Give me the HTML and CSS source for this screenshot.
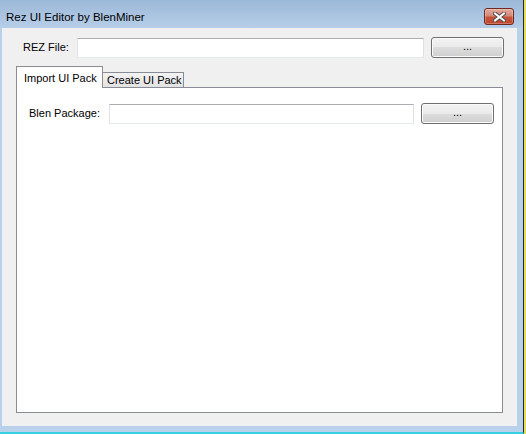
FILE: index.html
```html
<!DOCTYPE html>
<html>
<head>
<meta charset="utf-8">
<title>Rez UI Editor by BlenMiner</title>
<link rel="stylesheet" href="styles.css">
</head>
<body>
<div class="window">
  <div class="titlebar">
    <div class="title">Rez UI Editor by BlenMiner</div>
    <div class="close">
      <svg width="13" height="10" viewBox="0 0 13 10">
        <path d="M2 1.5 L11 8.5 M11 1.5 L2 8.5" stroke="#4a4a4a" stroke-width="4" stroke-linecap="square" fill="none"/>
        <path d="M2 1.5 L11 8.5 M11 1.5 L2 8.5" stroke="#ffffff" stroke-width="2" stroke-linecap="square" fill="none"/>
      </svg>
    </div>
  </div>
  <div class="client">
    <div class="row rez-row">
      <div class="label rez-label">REZ File:</div>
      <div class="textbox rez-box"></div>
      <div class="btn">...</div>
    </div>
    <div class="tabstrip">
      <div class="tab active">Import UI Pack</div>
      <div class="tab">Create UI Pack</div>
    </div>
    <div class="panel">
      <div class="row blen-row">
        <div class="label blen-label">Blen Package:</div>
        <div class="textbox blen-box"></div>
        <div class="btn">...</div>
      </div>
    </div>
  </div>
</div>
</body>
</html>
```

FILE: styles.css
```css
html, body {
  margin: 0;
  padding: 0;
}
body {
  width: 526px;
  height: 434px;
  background: #e9dc5a;
  overflow: hidden;
  font-family: "Liberation Sans", Arial, sans-serif;
  font-size: 11px;
  color: #000;
}
.window {
  width: 523px;
  height: 432px;
  background: #b9d1ea;
  border-right: 1px solid #1f2a33;
  border-bottom: 2px solid #37cfe2;
  display: flex;
  flex-direction: column;
}
.titlebar {
  height: 28px;
  flex: none;
  background: linear-gradient(#9cb8d8, #b6cee8);
  display: flex;
  justify-content: space-between;
  align-items: flex-start;
}
.title {
  margin: 10px 0 0 6px;
  font-size: 11.5px;
  line-height: 14px;
  color: #000;
}
.close {
  box-sizing: border-box;
  width: 30px;
  height: 17px;
  margin: 8px 9px 0 0;
  border: 1px solid #6e2a20;
  border-radius: 3px;
  background: linear-gradient(#e3aa9c 0%, #d68876 45%, #c6533c 55%, #c0452e 100%);
  box-shadow: inset 0 0 0 1px rgba(255,255,255,0.25);
  display: flex;
  align-items: center;
  justify-content: center;
}
.close svg {
  display: block;
}
.client {
  margin-left: 2px;
  width: 515px;
  height: 398px;
  background: #f0f0f0;
  display: flex;
  flex-direction: column;
}
.row {
  display: flex;
  align-items: flex-start;
  height: 21px;
}
.rez-row {
  margin-top: 9px;
  padding-left: 21px;
}
.label {
  line-height: 21px;
  white-space: nowrap;
}
.rez-label {
  width: 54px;
}
.textbox {
  box-sizing: border-box;
  height: 20px;
  margin-top: 1px;
  background: #fff;
  border: 1px solid;
  border-color: #abadb3 #dbdfe6 #e3e9ef #e2e3ea;
}
.rez-box {
  width: 347px;
  margin-right: 7px;
}
.btn {
  box-sizing: border-box;
  width: 73px;
  height: 21px;
  border: 1px solid #707070;
  border-radius: 3px;
  background: linear-gradient(#f2f2f2 0%, #ebebeb 50%, #dddddd 50%, #cfcfcf 100%);
  box-shadow: inset 0 0 0 1px #fbfbfb;
  text-align: center;
  line-height: 17px;
  font-size: 11px;
}
.tabstrip {
  margin-top: 8px;
  padding-left: 14px;
  height: 21px;
  display: flex;
  align-items: flex-end;
  position: relative;
  z-index: 1;
}
.tab {
  box-sizing: border-box;
  border: 1px solid #898c95;
  border-bottom: none;
  white-space: nowrap;
  line-height: 13px;
}
.tab.active {
  width: 87px;
  height: 22px;
  margin-bottom: -1px;
  padding: 5px 0 0 7px;
  background: #fff;
  position: relative;
  z-index: 2;
}
.tab:not(.active) {
  width: 82px;
  height: 15px;
  margin-left: -1px;
  padding: 1px 0 0 4px;
  background: linear-gradient(#f3f3f3, #e2e2e2);
}
.panel {
  box-sizing: border-box;
  margin-left: 14px;
  width: 487px;
  height: 326px;
  border: 1px solid #898c95;
  background: #fff;
}
.blen-row {
  margin-top: 15px;
  padding-left: 12px;
}
.blen-label {
  width: 80px;
}
.blen-box {
  width: 305px;
  margin-right: 7px;
}
```
